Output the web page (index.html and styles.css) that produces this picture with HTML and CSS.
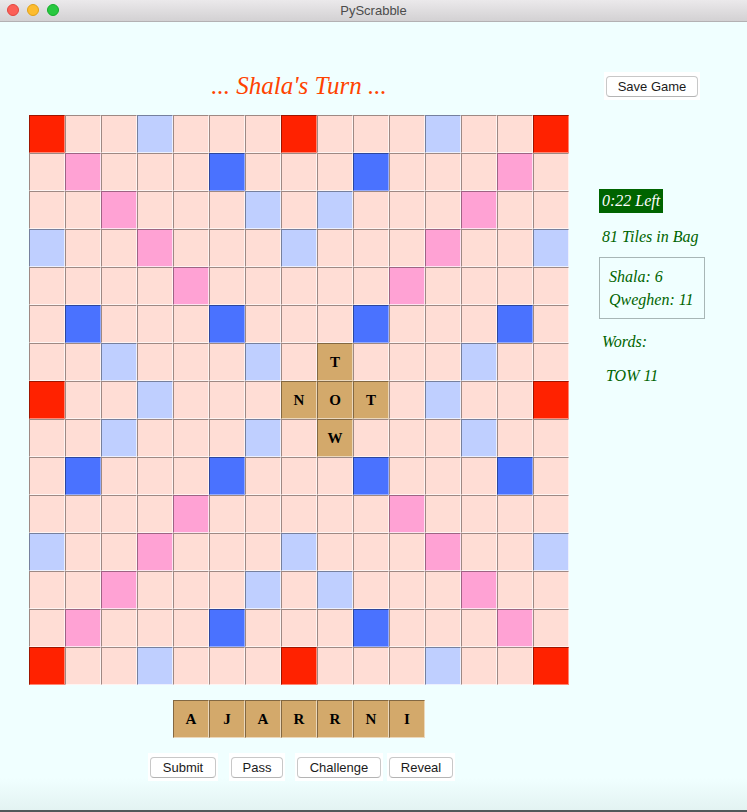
FILE: index.html
```html
<!DOCTYPE html>
<html>
<head>
<meta charset="utf-8">
<title>PyScrabble</title>
<link rel="stylesheet" href="styles.css">
</head>
<body>
<div class="titlebar">
  <div class="lights"><span class="light red"></span><span class="light yellow"></span><span class="light green"></span></div>
  <div class="wintitle">PyScrabble</div>
</div>
<div class="content">
  <div class="top">
    <div class="turn">... Shala's Turn ...</div>
    <div class="btnbox save"><button class="btn">Save Game</button></div>
  </div>
  <div class="main">
    <div class="left">
      <div class="board">
        <span class="c r"></span><span class="c"></span><span class="c"></span><span class="c l"></span><span class="c"></span><span class="c"></span><span class="c"></span><span class="c r"></span><span class="c"></span><span class="c"></span><span class="c"></span><span class="c l"></span><span class="c"></span><span class="c"></span><span class="c r"></span>
        <span class="c"></span><span class="c p"></span><span class="c"></span><span class="c"></span><span class="c"></span><span class="c b"></span><span class="c"></span><span class="c"></span><span class="c"></span><span class="c b"></span><span class="c"></span><span class="c"></span><span class="c"></span><span class="c p"></span><span class="c"></span>
        <span class="c"></span><span class="c"></span><span class="c p"></span><span class="c"></span><span class="c"></span><span class="c"></span><span class="c l"></span><span class="c"></span><span class="c l"></span><span class="c"></span><span class="c"></span><span class="c"></span><span class="c p"></span><span class="c"></span><span class="c"></span>
        <span class="c l"></span><span class="c"></span><span class="c"></span><span class="c p"></span><span class="c"></span><span class="c"></span><span class="c"></span><span class="c l"></span><span class="c"></span><span class="c"></span><span class="c"></span><span class="c p"></span><span class="c"></span><span class="c"></span><span class="c l"></span>
        <span class="c"></span><span class="c"></span><span class="c"></span><span class="c"></span><span class="c p"></span><span class="c"></span><span class="c"></span><span class="c"></span><span class="c"></span><span class="c"></span><span class="c p"></span><span class="c"></span><span class="c"></span><span class="c"></span><span class="c"></span>
        <span class="c"></span><span class="c b"></span><span class="c"></span><span class="c"></span><span class="c"></span><span class="c b"></span><span class="c"></span><span class="c"></span><span class="c"></span><span class="c b"></span><span class="c"></span><span class="c"></span><span class="c"></span><span class="c b"></span><span class="c"></span>
        <span class="c"></span><span class="c"></span><span class="c l"></span><span class="c"></span><span class="c"></span><span class="c"></span><span class="c l"></span><span class="c"></span><span class="c t">T</span><span class="c"></span><span class="c"></span><span class="c"></span><span class="c l"></span><span class="c"></span><span class="c"></span>
        <span class="c r"></span><span class="c"></span><span class="c"></span><span class="c l"></span><span class="c"></span><span class="c"></span><span class="c"></span><span class="c t">N</span><span class="c t">O</span><span class="c t">T</span><span class="c"></span><span class="c l"></span><span class="c"></span><span class="c"></span><span class="c r"></span>
        <span class="c"></span><span class="c"></span><span class="c l"></span><span class="c"></span><span class="c"></span><span class="c"></span><span class="c l"></span><span class="c"></span><span class="c t">W</span><span class="c"></span><span class="c"></span><span class="c"></span><span class="c l"></span><span class="c"></span><span class="c"></span>
        <span class="c"></span><span class="c b"></span><span class="c"></span><span class="c"></span><span class="c"></span><span class="c b"></span><span class="c"></span><span class="c"></span><span class="c"></span><span class="c b"></span><span class="c"></span><span class="c"></span><span class="c"></span><span class="c b"></span><span class="c"></span>
        <span class="c"></span><span class="c"></span><span class="c"></span><span class="c"></span><span class="c p"></span><span class="c"></span><span class="c"></span><span class="c"></span><span class="c"></span><span class="c"></span><span class="c p"></span><span class="c"></span><span class="c"></span><span class="c"></span><span class="c"></span>
        <span class="c l"></span><span class="c"></span><span class="c"></span><span class="c p"></span><span class="c"></span><span class="c"></span><span class="c"></span><span class="c l"></span><span class="c"></span><span class="c"></span><span class="c"></span><span class="c p"></span><span class="c"></span><span class="c"></span><span class="c l"></span>
        <span class="c"></span><span class="c"></span><span class="c p"></span><span class="c"></span><span class="c"></span><span class="c"></span><span class="c l"></span><span class="c"></span><span class="c l"></span><span class="c"></span><span class="c"></span><span class="c"></span><span class="c p"></span><span class="c"></span><span class="c"></span>
        <span class="c"></span><span class="c p"></span><span class="c"></span><span class="c"></span><span class="c"></span><span class="c b"></span><span class="c"></span><span class="c"></span><span class="c"></span><span class="c b"></span><span class="c"></span><span class="c"></span><span class="c"></span><span class="c p"></span><span class="c"></span>
        <span class="c r"></span><span class="c"></span><span class="c"></span><span class="c l"></span><span class="c"></span><span class="c"></span><span class="c"></span><span class="c r"></span><span class="c"></span><span class="c"></span><span class="c"></span><span class="c l"></span><span class="c"></span><span class="c"></span><span class="c r"></span>
      </div>
      <div class="rack">
        <span class="c t">A</span><span class="c t">J</span><span class="c t">A</span><span class="c t">R</span><span class="c t">R</span><span class="c t">N</span><span class="c t">I</span>
      </div>
      <div class="actions">
        <div class="btnbox b-submit"><button class="btn">Submit</button></div>
        <div class="btnbox b-pass"><button class="btn">Pass</button></div>
        <div class="btnbox b-challenge"><button class="btn">Challenge</button></div>
        <div class="btnbox b-reveal"><button class="btn">Reveal</button></div>
      </div>
    </div>
    <div class="side">
      <div class="timer">0:22 Left</div>
      <div class="bag">81 Tiles in Bag</div>
      <div class="scores">
        <div>Shala: 6</div>
        <div>Qweghen: 11</div>
      </div>
      <div class="words">Words:</div>
      <div class="word">TOW 11</div>
    </div>
  </div>
</div>
</body>
</html>
```
FILE: styles.css
```css
* { box-sizing: border-box; }
html, body { margin: 0; padding: 0; }
body {
  width: 747px;
  height: 812px;
  overflow: hidden;
  background: linear-gradient(to bottom, #f0ffff 0, #f0ffff 778px, #e3f3f2 810px, #51575a 810px, #51575a 812px);
  font-family: "Liberation Serif", serif;
}
.titlebar {
  height: 22px;
  background: linear-gradient(to bottom, #ebe9eb, #d3d1d3);
  border-bottom: 1px solid #b3b1b3;
  display: flex;
  align-items: center;
  justify-content: center;
}
.lights {
  position: absolute;
  left: 7px;
  top: 4px;
  display: flex;
  gap: 8px;
}
.light {
  width: 12px;
  height: 12px;
  border-radius: 50%;
  display: block;
}
.light.red { background: #fc5f57; border: 1px solid #e2463f; }
.light.yellow { background: #fdbc2e; border: 1px solid #e1a116; }
.light.green { background: #28c840; border: 1px solid #14ae2a; }
.wintitle {
  font-family: "Liberation Sans", sans-serif;
  font-size: 13px;
  color: #4c4c4c;
}
.content { padding-left: 29px; }
.top {
  display: flex;
  align-items: center;
  height: 93px;
  padding-top: 34px;
}
.turn {
  width: 540px;
  text-align: center;
  font-style: italic;
  font-size: 25px;
  color: #ff4300;
}
.btnbox {
  background: #ffffff;
  height: 28px;
  display: flex;
  align-items: center;
  justify-content: center;
}
.save { margin-left: 35px; width: 96px; margin-top: 1px; }
.btn {
  font-family: "Liberation Sans", sans-serif;
  font-size: 13px;
  color: #1b1b1b;
  background: #ffffff;
  border: 1px solid #c8c8c8;
  border-bottom-color: #b4b4b4;
  border-radius: 4px;
  height: 21px;
  padding: 0;
  line-height: 19px;
  width: calc(100% - 4px);
}
.main { display: flex; }
.left { width: 540px; }
.board {
  display: grid;
  grid-template-columns: repeat(15, 36px);
  grid-auto-rows: 38px;
}
.c {
  display: flex;
  align-items: center;
  justify-content: center;
  background: #ffddd5;
  border: 1px solid;
  border-color: rgba(0,0,0,0.38) rgba(255,255,255,0.7) rgba(255,255,255,0.7) rgba(0,0,0,0.38);
  font-weight: bold;
  font-size: 15px;
  color: #000;
}
.c.r { background: #ff2200; border-right-color: rgba(255,255,255,0.45); border-bottom-color: rgba(255,255,255,0.45); }
.c.p { background: #ffa2d4; }
.c.l { background: #bfcfff; }
.c.b { background: #4a72ff; border-right-color: rgba(255,255,255,0.4); border-bottom-color: rgba(255,255,255,0.4); }
.c.t { background: #d3a96b; border-right-color: rgba(255,255,255,0.55); border-bottom-color: rgba(255,255,255,0.55); }
.rack {
  display: grid;
  grid-template-columns: repeat(7, 36px);
  grid-auto-rows: 38px;
  width: 252px;
  margin: 15px auto 0;
}
.actions {
  display: flex;
  margin-top: 15px;
  padding-left: 119px;
}
.b-submit { width: 70px; }
.b-pass { width: 56px; margin-left: 11px; }
.b-challenge { width: 88px; margin-left: 10px; }
.b-reveal { width: 68px; margin-left: 4px; }
.side {
  margin-left: 30px;
  padding-top: 74px;
  color: #006400;
  font-style: italic;
  font-size: 16px;
}
.timer {
  display: inline-block;
  background: #006400;
  color: #ffffff;
  height: 24px;
  line-height: 24px;
  width: 64px;
  padding-left: 3px;
}
.bag {
  margin-top: 13px;
  padding-left: 3px;
  line-height: 22px;
}
.scores {
  margin-top: 9px;
  width: 106px;
  height: 62px;
  border: 1px solid #a8b6b6;
  padding: 7px 0 0 9px;
  line-height: 23px;
}
.words {
  margin-top: 12px;
  padding-left: 3px;
  line-height: 22px;
}
.word {
  margin-top: 12px;
  padding-left: 7px;
  line-height: 22px;
}
```
